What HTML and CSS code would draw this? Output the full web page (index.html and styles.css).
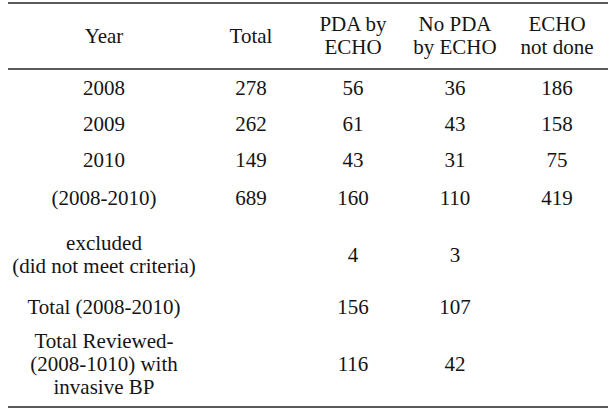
FILE: index.html
```html
<!DOCTYPE html>
<html>
<head>
<meta charset="utf-8">
<link rel="stylesheet" href="styles.css">
</head>
<body>
<table class="data">
  <colgroup>
    <col class="c-year">
    <col class="c-num">
    <col class="c-num">
    <col class="c-num">
    <col class="c-num">
  </colgroup>
  <thead>
    <tr>
      <th>Year</th>
      <th>Total</th>
      <th>PDA by<br>ECHO</th>
      <th>No PDA<br>by ECHO</th>
      <th>ECHO<br>not done</th>
    </tr>
  </thead>
  <tbody>
    <tr class="r1"><td>2008</td><td>278</td><td>56</td><td>36</td><td>186</td></tr>
    <tr class="r2"><td>2009</td><td>262</td><td>61</td><td>43</td><td>158</td></tr>
    <tr class="r3"><td>2010</td><td>149</td><td>43</td><td>31</td><td>75</td></tr>
    <tr class="r4"><td>(2008-2010)</td><td>689</td><td>160</td><td>110</td><td>419</td></tr>
    <tr class="r5"><td>excluded<br>(did not meet criteria)</td><td></td><td>4</td><td>3</td><td></td></tr>
    <tr class="r6"><td>Total (2008-2010)</td><td></td><td>156</td><td>107</td><td></td></tr>
    <tr class="r7"><td>Total Reviewed-<br>(2008-1010) with<br>invasive BP</td><td></td><td>116</td><td>42</td><td></td></tr>
  </tbody>
</table>
</body>
</html>
```
FILE: styles.css
```css
html, body {
  margin: 0;
  padding: 0;
  background: #ffffff;
}

body {
  font-family: "Liberation Serif", "Times New Roman", serif;
  font-size: 21px;
  line-height: 23px;
  color: #141414;
  padding: 2px 0 0 8px;
}

.data {
  border-collapse: collapse;
  table-layout: fixed;
  width: 600px;
  border-top: 2px solid #5a5a5a;
  border-bottom: 2px solid #5a5a5a;
}

.c-year { width: 192px; }
.c-num { width: 102px; }

.data th,
.data td {
  text-align: center;
  vertical-align: middle;
  padding: 0;
  font-weight: normal;
}

.data thead th {
  height: 64px;
  border-bottom: 2px solid #5a5a5a;
}

.r1 td { height: 37px; }
.r2 td { height: 35px; }
.r3 td { height: 36px; }
.r4 td { height: 40px; }
.r5 td { height: 74px; }
.r6 td { height: 30px; }
.r7 td { height: 84px; }
```
